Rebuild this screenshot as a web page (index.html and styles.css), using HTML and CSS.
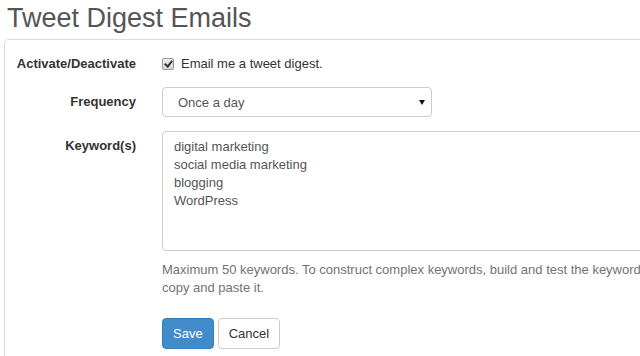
FILE: index.html
```html
<!DOCTYPE html>
<html lang="en">
<head>
    <meta charset="UTF-8">
    <meta name="viewport" content="width=device-width, initial-scale=1.0">
    <title>Tweet Digest Emails</title>
    <link rel="stylesheet" href="styles.css">
</head>
<body>

    <div class="page">
        <h1>Tweet Digest Emails</h1>

        <div class="panel">
            <form id="digestForm">
                <div class="form-row">
                    <label for="activate">Activate/Deactivate</label>
                    <div class="checkbox">
                        <input type="checkbox" id="activate" checked>
                        <span>Email me a tweet digest.</span>
                    </div>
                </div>

                <div class="form-row">
                    <label for="frequency">Frequency</label>
                    <div class="select-wrap">
                        <select id="frequency">
                            <option>Once a day</option>
                            <option>Once a week</option>
                        </select>
                        <span class="caret"></span>
                    </div>
                </div>

                <div class="form-row">
                    <label for="keywords" class="top-label">Keyword(s)</label>
                    <div>
                        <textarea id="keywords">digital marketing
social media marketing
blogging
WordPress</textarea>
                        <p class="help">Maximum 50 keywords. To construct complex keywords, build and test the keyword in Twitter Search, then copy and paste it.</p>
                    </div>
                </div>

                <div class="form-row">
                    <span></span>
                    <div class="buttons">
                        <button type="button" class="btn btn-primary">Save</button>
                        <button type="button" class="btn">Cancel</button>
                    </div>
                </div>
            </form>
        </div>
    </div>

</body>
</html>
```

FILE: styles.css
```css
body {
    font-family: "Liberation Sans", Arial, sans-serif;
    font-size: 13px;
    line-height: 18px;
    color: #333;
    background: #fff;
    margin: 0;
    overflow: hidden;
}
.page {
    padding-left: 4px;
}
h1 {
    margin: 0;
    padding: 1px 0 0 3px;
    font-size: 27px;
    line-height: 35px;
    font-weight: normal;
    color: #555;
}
.panel {
    width: 800px;
    margin-top: 3px;
    padding: 15px 0 20px;
    border: 1px solid #ddd;
    border-radius: 4px;
}
.form-row {
    display: grid;
    grid-template-columns: 131px 1fr;
    column-gap: 26px;
    align-items: center;
    margin-bottom: 14px;
}
.form-row label {
    text-align: right;
    font-weight: bold;
    color: #333;
}
.form-row .top-label {
    align-self: start;
    padding-top: 6px;
}
.checkbox {
    display: flex;
    align-items: center;
    gap: 7px;
    font-size: 13px;
}
.checkbox input {
    -webkit-appearance: none;
    appearance: none;
    position: relative;
    width: 12px;
    height: 12px;
    margin: 0;
    border: 1px solid #999;
    border-radius: 2px;
    background: linear-gradient(#eee, #d6d6d6);
}
.checkbox input:checked::after {
    content: "";
    position: absolute;
    left: 3px;
    top: 0px;
    width: 3px;
    height: 6px;
    border: solid #333;
    border-width: 0 2px 2px 0;
    transform: rotate(40deg);
}
.select-wrap {
    position: relative;
    width: 270px;
}
select {
    -webkit-appearance: none;
    appearance: none;
    width: 100%;
    height: 30px;
    padding: 0 15px;
    font-family: inherit;
    font-size: 13px;
    color: #555;
    background: #fff;
    border: 1px solid #ccc;
    border-radius: 4px;
}
.caret {
    position: absolute;
    right: 7px;
    top: 13px;
    border-left: 3px solid transparent;
    border-right: 3px solid transparent;
    border-top: 5px solid #111;
}
textarea {
    display: block;
    box-sizing: border-box;
    width: 620px;
    height: 120px;
    padding: 6px 11px;
    font-family: inherit;
    font-size: 13px;
    line-height: 18px;
    color: #555;
    border: 1px solid #ccc;
    border-radius: 4px;
    resize: none;
}
.help {
    width: 620px;
    margin: 10px 0 0;
    color: #737373;
}
.form-row .buttons {
    display: flex;
    gap: 4px;
    margin-top: 7px;
}
.btn {
    height: 31px;
    padding: 0 10px;
    font-family: inherit;
    font-size: 13px;
    color: #333;
    background: #fff;
    border: 1px solid #ccc;
    border-radius: 4px;
}
.btn-primary {
    color: #fff;
    background: #428bca;
    border-color: #357ebd;
}
```
